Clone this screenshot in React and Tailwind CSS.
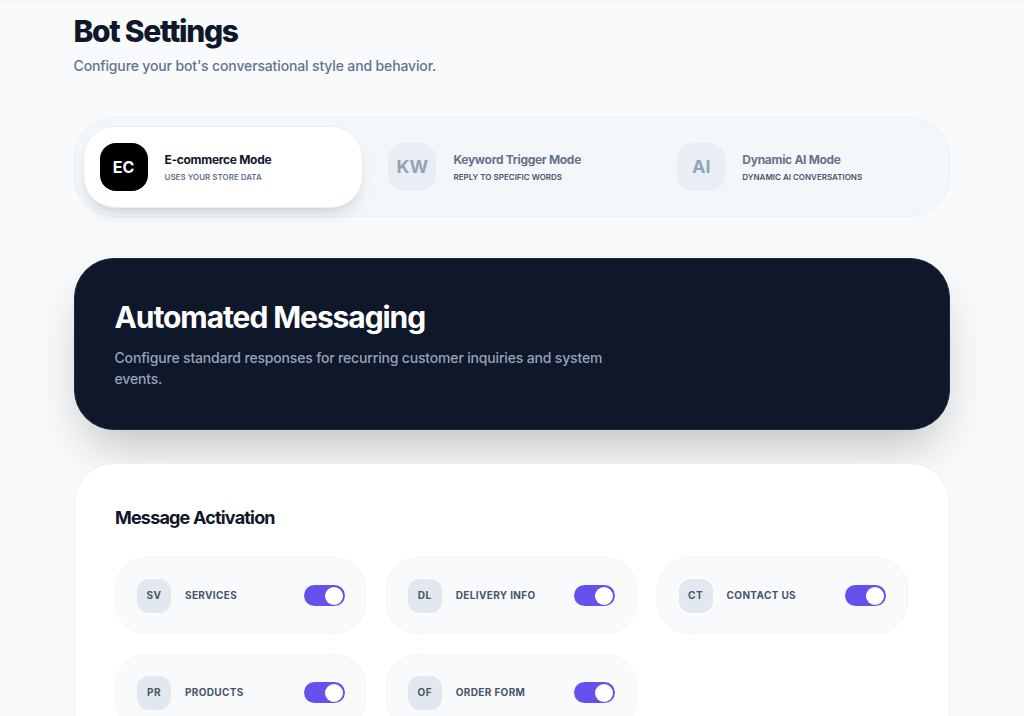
const modes = [
  { code: 'EC', title: 'E-commerce Mode', sub: 'Uses your store data', active: true },
  { code: 'KW', title: 'Keyword Trigger Mode', sub: 'Reply to specific words' },
  { code: 'AI', title: 'Dynamic AI Mode', sub: 'Dynamic AI conversations' },
];

const messages = [
  { code: 'SV', label: 'Services' },
  { code: 'DL', label: 'Delivery Info' },
  { code: 'CT', label: 'Contact Us' },
  { code: 'PR', label: 'Products' },
  { code: 'OF', label: 'Order Form' },
];

function Toggle() {
  return (
    <div className="flex h-[21px] w-[41px] shrink-0 items-center justify-end rounded-full bg-[#6650ee] pr-[2px]">
      <div className="h-[18px] w-[18px] rounded-full bg-white" />
    </div>
  );
}

export default function App() {
  return (
    <div className="h-[716px] overflow-hidden border-t border-[#f1f5f9] bg-[#f8fafc] font-['Inter',sans-serif]">
      <div className="ml-[73.5px] w-[876.5px] pt-[12px]">
        <h1 className="text-3xl leading-9 font-extrabold tracking-[-0.044em] text-[#0f172a]">Bot Settings</h1>
        <p className="mt-[7px] text-sm leading-5 font-medium tracking-[-0.01em] text-[#64748b]">Configure your bot's conversational style and behavior.</p>

        <div className="mt-[41px] grid grid-cols-3 gap-[8.3px] rounded-[40px] border border-[#edf1f6] bg-[#f1f5f9]/60 p-2">
          {modes.map(m => (
            <div key={m.code} className={`flex items-center gap-[17px] rounded-[32px] border px-4 py-4 ${m.active ? 'border-[#e9eef4] bg-white shadow-lg' : 'border-transparent'}`}>
              <div className={`flex h-12 w-12 shrink-0 items-center justify-center rounded-2xl font-bold ${m.active ? 'bg-black text-base text-white' : 'bg-[#e9eef4] text-lg text-[#94a3b8]'}`}>{m.code}</div>
              <div>
                <p className={`text-xs leading-4 font-bold tracking-[-0.025em] ${m.active ? 'text-[#0f172a]' : 'text-[#64748b]'}`}>{m.title}</p>
                <p className={`mt-[3px] text-[8px] leading-3 font-semibold uppercase ${m.active ? 'text-[#64748b]' : 'text-[#475569]'}`}>{m.sub}</p>
              </div>
            </div>
          ))}
        </div>

        <div className="mt-[41px] rounded-[40px] border border-[#1e293b] bg-[#0f172a] p-10 shadow-2xl">
          <h2 className="text-3xl leading-9 font-bold tracking-[-0.036em] text-white">Automated Messaging</h2>
          <p className="mt-3 max-w-lg text-sm leading-[21px] font-medium tracking-[-0.012em] text-[#94a3b8]">Configure standard responses for recurring customer inquiries and system events.</p>
        </div>

        <div className="mt-[33px] rounded-[40px] border border-[#edf1f6] bg-white py-10 pr-10 pl-[40.5px]">
          <h3 className="text-lg leading-7 font-bold tracking-[-0.045em] text-[#0f172a]">Message Activation</h3>
          <div className="mt-[25px] grid grid-cols-[repeat(3,251px)] gap-x-[19.8px] gap-y-5">
            {messages.map(m => (
              <div key={m.code} className="flex items-center gap-[14px] rounded-[32px] border border-[#f1f5f9] bg-[#f8fafc] py-[20.5px] pr-[20.5px] pl-[21px]">
                <div className="flex h-[34px] w-[34px] shrink-0 items-center justify-center rounded-xl bg-[#e2e8f0] text-[10px] font-bold tracking-[0.05em] text-[#475569]">{m.code}</div>
                <span className="flex-1 text-[10px] font-bold tracking-[0.035em] text-[#475569] uppercase">{m.label}</span>
                <Toggle />
              </div>
            ))}
          </div>
        </div>
      </div>
    </div>
  );
}
